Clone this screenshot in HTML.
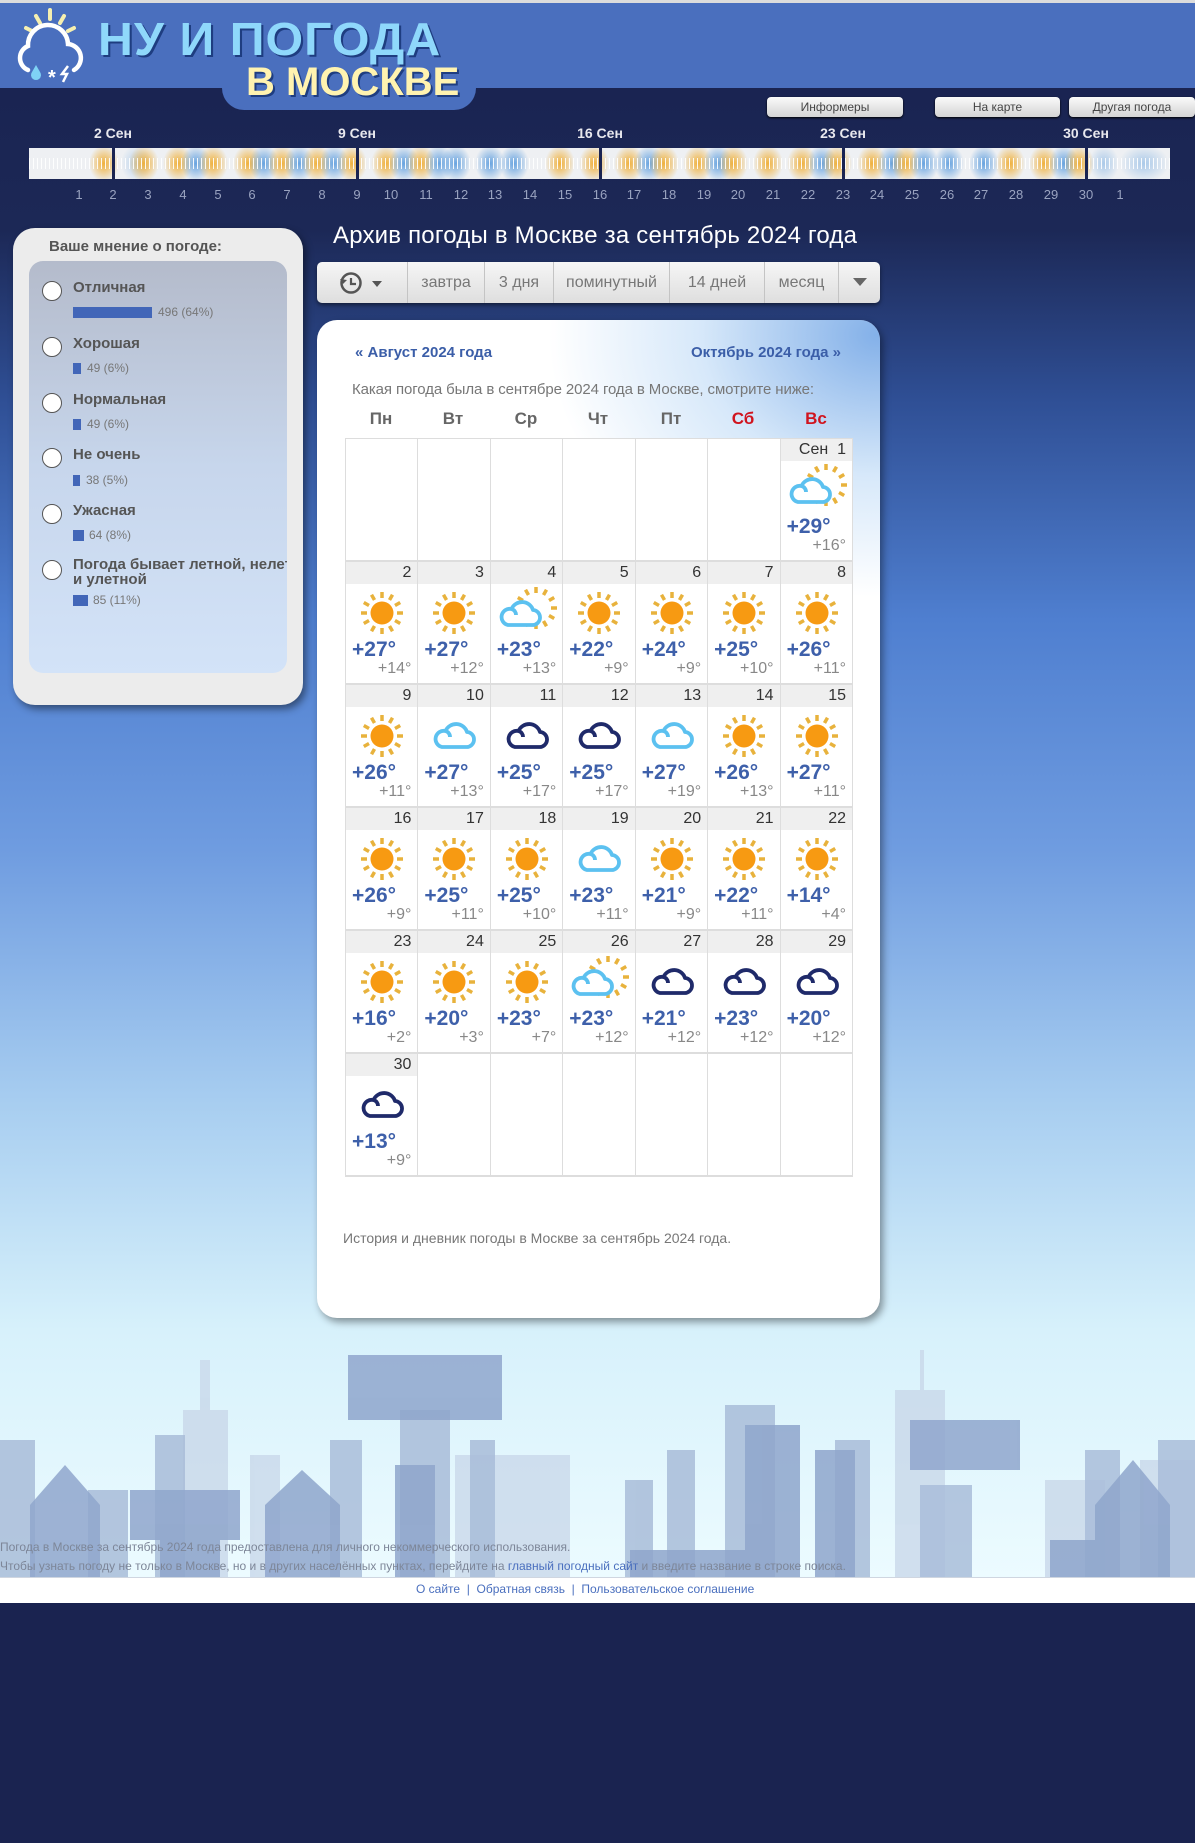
<!DOCTYPE html>
<html><head><meta charset="utf-8">
<style>
*{margin:0;padding:0;box-sizing:border-box}
body{width:1195px;height:1843px;position:relative;overflow:hidden;font-family:"Liberation Sans","DejaVu Sans",sans-serif;
background:linear-gradient(180deg,#dcdcdc 0,#dcdcdc 3px,#4a6fbe 3px,#4a6fbe 88px,#1a2452 88px,#1c2856 230px,#2f4f95 400px,#4f7fd0 620px,#6f9ce0 850px,#a7cdf0 1100px,#d7f1fb 1330px,#ecfbff 1578px,#fff 1578px,#fff 1603px,#1a2350 1603px);}
.abs{position:absolute}
.hbump{left:222px;top:80px;width:254px;height:30px;background:#4a6fbe;border-radius:0 0 22px 22px}
.logo1{left:98px;top:12px;font-size:46px;font-weight:900;color:#8fd8fb;letter-spacing:1px;text-shadow:2px 2px 0 #1e3d80;transform:scaleX(1.05);transform-origin:left}
.logo2{left:246px;top:60px;font-size:40px;font-weight:900;color:#fff3b0;text-shadow:2px 2px 0 #1e3d80}
.btn{top:97px;height:20px;border-radius:4px;background:linear-gradient(#fafafa,#d4d4d4);font-size:12px;color:#444;text-align:center;line-height:20px;box-shadow:0 1px 2px #000}
.wl{top:125px;font-size:14px;font-weight:bold;color:#e8e8ee;transform:translateX(-50%)}
.num{top:187px;font-size:13px;color:#9aa3c0;transform:translateX(-50%)}
.bar{left:29px;top:148px;width:1141px;height:31px;background:#eef0f3;overflow:hidden}
.bar .t{position:absolute;inset:10px 0;background:repeating-linear-gradient(90deg,rgba(255,255,255,.9) 0 1px,transparent 1px 4px)}
.bl{position:absolute;top:0;height:31px;width:30px}
.o{background:radial-gradient(ellipse 50% 60% at center,rgba(240,170,40,.9),rgba(240,170,40,0))}
.b{background:radial-gradient(ellipse 50% 60% at center,rgba(80,150,220,.85),rgba(80,150,220,0))}
.sep{position:absolute;top:0;width:3px;height:31px;background:#1a2452}
.panel{left:13px;top:228px;width:290px;height:477px;background:#ececec;border-radius:22px;box-shadow:3px 4px 8px rgba(0,0,0,.45)}
.inner{left:29px;top:261px;width:258px;height:412px;border-radius:14px;background:linear-gradient(#b4bbcb,#c7d6ec 50%,#d3e3f8)}
.ptitle{left:49px;top:238px;font-size:15px;color:#555;font-weight:bold}
.rad{left:42px;width:20px;height:20px;border-radius:50%;background:#fff;border:1.5px solid #555}
.lab{left:73px;font-size:15px;font-weight:bold;color:#555}
.pb{left:73px;height:11px;background:#4266b8}
.pv{font-size:12px;color:#777}
.title{left:333px;top:222px;font-size:24px;color:#fff;font-weight:normal;letter-spacing:.2px}
.tabs{left:317px;top:262px;width:563px;height:41px;border-radius:5px;background:linear-gradient(#f6f6f6,#dedede);box-shadow:0 2px 4px rgba(0,0,0,.5)}
.tab{top:262px;height:41px;line-height:41px;font-size:16px;color:#777;text-align:center;border-left:1px solid #c4c4c4}
.card{left:317px;top:320px;width:563px;height:998px;background:#fff;border-radius:20px;box-shadow:3px 4px 8px rgba(0,0,0,.4);overflow:hidden}
.glow{position:absolute;right:-60px;top:-80px;width:420px;height:380px;background:radial-gradient(ellipse at 85% 25%,rgba(90,150,225,.75),rgba(140,190,240,.35) 35%,rgba(255,255,255,0) 65%)}
.nav{top:344px;font-size:15px;font-weight:bold;color:#3b5ea8}
.intro{left:352px;top:381px;font-size:15px;color:#777;letter-spacing:-.1px}
.wd{top:409px;font-size:17px;font-weight:bold;color:#666;width:72px;text-align:center}
.grid{left:345px;top:438px;width:508px;display:grid;grid-template-columns:repeat(7,1fr);grid-auto-rows:123px;border-left:1px solid #ddd;border-top:1px solid #ddd}
.grid>div{border-right:1px solid #ddd;border-bottom:2px solid #ddd;position:relative;background:#fff}
.d{height:22px;background:#efefef;text-align:right;padding-right:6px;font-size:16px;color:#333;line-height:22px}
.grid svg{position:absolute;left:13px;top:28px;width:46px;height:46px;overflow:visible}
.h{position:absolute;left:6px;top:76px;font-size:21px;font-weight:bold;color:#3e60aa}
.l{position:absolute;right:6px;top:98px;font-size:16px;color:#888}
.foot{left:0;font-size:12px;color:#7d8698}
</style></head><body>
<svg width="0" height="0" style="position:absolute">
<defs>
<g id="rays" stroke="#e8b23c" stroke-width="3.5" stroke-linecap="butt">
<line x1="23" y1="2" x2="23" y2="8"/><line x1="23" y1="38" x2="23" y2="44"/><line x1="2" y1="23" x2="8" y2="23"/><line x1="38" y1="23" x2="44" y2="23"/>
<line x1="12.5" y1="4.8" x2="15.5" y2="10"/><line x1="30.5" y1="36" x2="33.5" y2="41.2"/><line x1="4.8" y1="12.5" x2="10" y2="15.5"/><line x1="36" y1="30.5" x2="41.2" y2="33.5"/>
<line x1="33.5" y1="4.8" x2="30.5" y2="10"/><line x1="15.5" y1="36" x2="12.5" y2="41.2"/><line x1="41.2" y1="12.5" x2="36" y2="15.5"/><line x1="10" y1="30.5" x2="4.8" y2="33.5"/>
</g>
<symbol id="sun" viewBox="0 0 46 46" overflow="visible"><use href="#rays"/><circle cx="23" cy="23" r="11.5" fill="#f79a12"/></symbol>
<path id="cl" d="M11 34 H35 A7.5 7.5 0 0 0 36 19 A11.5 11.5 0 0 0 14.5 18 A8 8 0 0 0 11 34 Z M14.5 18 A6 6 0 0 1 19 24" stroke-width="3.8" stroke-linejoin="round"/>
<symbol id="lc" viewBox="0 0 46 46" overflow="visible"><use href="#cl" stroke="#5cc1f0" fill="none"/></symbol>
<symbol id="dc" viewBox="0 0 46 46" overflow="visible"><use href="#cl" stroke="#1f2a6a" fill="none"/></symbol>
<symbol id="pc" viewBox="0 0 46 46" overflow="visible"><g transform="translate(9,-5)"><use href="#rays"/></g><use href="#cl" stroke="#5cc1f0" fill="#fff" transform="translate(-7,1)"/></symbol>
</defs></svg>

<!-- header -->
<div class="abs hbump"></div>
<svg class="abs" style="left:12px;top:6px" width="76" height="80" viewBox="0 0 76 80">
<g stroke="#f6efb0" stroke-width="4" stroke-linecap="round"><line x1="38" y1="4" x2="38" y2="13"/><line x1="24" y1="10" x2="28" y2="17"/><line x1="52" y1="10" x2="48" y2="17"/><line x1="14" y1="22" x2="20" y2="25"/><line x1="62" y1="22" x2="56" y2="25"/></g>
<path d="M16 64 A13 13 0 0 1 16 40 A20 20 0 0 1 56 38 A14 14 0 0 1 62 64" fill="none" stroke="#fff" stroke-width="4.5" stroke-linecap="round"/>
<path d="M28 66 a5 5 0 1 1 -8 0 l4 -7z" fill="#7fd3f5"/>
<text x="36" y="78" fill="#fff" font-size="20" font-weight="bold" font-family="Liberation Sans">*</text>
<path d="M56 60 l-6 8 h5 l-4 8" stroke="#fff" stroke-width="2.5" fill="none"/>
</svg>
<div class="abs logo1">НУ И ПОГОДА</div>
<div class="abs logo2">В МОСКВЕ</div>
<div class="abs btn" style="left:767px;width:136px">Информеры</div>
<div class="abs btn" style="left:935px;width:125px">На карте</div>
<div class="abs btn" style="left:1069px;width:126px">Другая погода</div>

<!-- timeline -->
<div class="abs wl" style="left:113px">2 Сен</div>
<div class="abs wl" style="left:357px">9 Сен</div>
<div class="abs wl" style="left:600px">16 Сен</div>
<div class="abs wl" style="left:843px">23 Сен</div>
<div class="abs wl" style="left:1086px">30 Сен</div>
<div class="abs bar">
<div class="bl o" style="left:60px"></div>
<div class="bl b" style="left:92px;opacity:.4"></div><div class="bl o" style="left:100px"></div><div class="bl o" style="left:134px"></div><div class="bl b" style="left:152px"></div><div class="bl o" style="left:169px"></div><div class="bl o" style="left:204px"></div><div class="bl b" style="left:220px"></div><div class="bl o" style="left:238px"></div><div class="bl b" style="left:255px"></div><div class="bl o" style="left:273px"></div><div class="bl b" style="left:290px"></div><div class="bl o" style="left:308px"></div>
<div class="bl o" style="left:342px"></div><div class="bl b" style="left:360px"></div><div class="bl o" style="left:377px"></div><div class="bl b" style="left:395px"></div><div class="bl b" style="left:412px"></div><div class="bl b" style="left:446px"></div><div class="bl b" style="left:470px"></div><div class="bl o" style="left:516px"></div><div class="bl o" style="left:550px"></div>
<div class="bl o" style="left:585px"></div><div class="bl b" style="left:605px"></div><div class="bl o" style="left:620px"></div><div class="bl o" style="left:654px"></div><div class="bl b" style="left:674px"></div><div class="bl o" style="left:689px"></div><div class="bl o" style="left:724px"></div><div class="bl o" style="left:758px"></div><div class="bl b" style="left:778px"></div><div class="bl o" style="left:793px"></div>
<div class="bl o" style="left:828px"></div><div class="bl b" style="left:848px"></div><div class="bl o" style="left:862px"></div><div class="bl b" style="left:880px"></div><div class="bl b" style="left:905px"></div><div class="bl b" style="left:940px"></div><div class="bl o" style="left:966px"></div><div class="bl o" style="left:1000px"></div><div class="bl b" style="left:1020px"></div><div class="bl o" style="left:1035px"></div>
<div class="bl b" style="left:1060px;opacity:.5"></div><div class="bl b" style="left:1090px;opacity:.5;width:50px"></div>
<div class="t"></div>
<div class="sep" style="left:83px"></div><div class="sep" style="left:327px"></div><div class="sep" style="left:570px"></div><div class="sep" style="left:813px"></div><div class="sep" style="left:1056px"></div>
</div>
<div class="abs num" style="left:79px">1</div><div class="abs num" style="left:113px">2</div><div class="abs num" style="left:148px">3</div><div class="abs num" style="left:183px">4</div><div class="abs num" style="left:218px">5</div><div class="abs num" style="left:252px">6</div><div class="abs num" style="left:287px">7</div><div class="abs num" style="left:322px">8</div><div class="abs num" style="left:357px">9</div><div class="abs num" style="left:391px">10</div><div class="abs num" style="left:426px">11</div><div class="abs num" style="left:461px">12</div><div class="abs num" style="left:495px">13</div><div class="abs num" style="left:530px">14</div><div class="abs num" style="left:565px">15</div><div class="abs num" style="left:600px">16</div><div class="abs num" style="left:634px">17</div><div class="abs num" style="left:669px">18</div><div class="abs num" style="left:704px">19</div><div class="abs num" style="left:738px">20</div><div class="abs num" style="left:773px">21</div><div class="abs num" style="left:808px">22</div><div class="abs num" style="left:843px">23</div><div class="abs num" style="left:877px">24</div><div class="abs num" style="left:912px">25</div><div class="abs num" style="left:947px">26</div><div class="abs num" style="left:981px">27</div><div class="abs num" style="left:1016px">28</div><div class="abs num" style="left:1051px">29</div><div class="abs num" style="left:1086px">30</div><div class="abs num" style="left:1120px">1</div>

<!-- left panel -->
<div class="abs panel"></div>
<div class="abs inner"></div>
<div class="abs ptitle">Ваше мнение о погоде:</div>
<div class="abs rad" style="top:281px"></div><div class="abs lab" style="top:279px">Отличная</div><div class="abs pb" style="top:307px;width:79px"></div><div class="abs pv" style="left:158px;top:305px">496 (64%)</div>
<div class="abs rad" style="top:337px"></div><div class="abs lab" style="top:335px">Хорошая</div><div class="abs pb" style="top:363px;width:8px"></div><div class="abs pv" style="left:87px;top:361px">49 (6%)</div>
<div class="abs rad" style="top:393px"></div><div class="abs lab" style="top:391px">Нормальная</div><div class="abs pb" style="top:419px;width:8px"></div><div class="abs pv" style="left:87px;top:417px">49 (6%)</div>
<div class="abs rad" style="top:448px"></div><div class="abs lab" style="top:446px">Не очень</div><div class="abs pb" style="top:475px;width:7px"></div><div class="abs pv" style="left:86px;top:473px">38 (5%)</div>
<div class="abs rad" style="top:504px"></div><div class="abs lab" style="top:502px">Ужасная</div><div class="abs pb" style="top:530px;width:11px"></div><div class="abs pv" style="left:89px;top:528px">64 (8%)</div>
<div class="abs rad" style="top:560px"></div><div class="abs lab" style="top:557px;width:214px;white-space:nowrap;overflow:hidden;line-height:15px">Погода бывает летной, нелетной<br>и улетной</div><div class="abs pb" style="top:595px;width:15px"></div><div class="abs pv" style="left:93px;top:593px">85 (11%)</div>

<!-- main -->
<div class="abs title">Архив погоды в Москве за сентябрь 2024 года</div>
<div class="abs tabs"></div>
<svg class="abs" style="left:338px;top:270px" width="48" height="26" viewBox="0 0 48 26"><circle cx="13" cy="13" r="9.5" fill="none" stroke="#555" stroke-width="2.5"/><path d="M13 8v6h5" stroke="#555" stroke-width="2.2" fill="none"/><path d="M2 9l3 5 4-4z" fill="#555"/><path d="M34 11h10l-5 6z" fill="#555"/></svg>
<div class="abs tab" style="left:407px;width:77px">завтра</div>
<div class="abs tab" style="left:484px;width:69px">3 дня</div>
<div class="abs tab" style="left:553px;width:116px">поминутный</div>
<div class="abs tab" style="left:669px;width:95px">14 дней</div>
<div class="abs tab" style="left:764px;width:74px">месяц</div>
<div class="abs tab" style="left:838px;width:42px"><svg width="14" height="10" viewBox="0 0 14 10"><path d="M0 1h14l-7 8z" fill="#666"/></svg></div>

<div class="abs card"><div class="glow"></div></div>
<div class="abs nav" style="left:355px">« Август 2024 года</div>
<div class="abs nav" style="left:691px">Октябрь 2024 года »</div>
<div class="abs intro">Какая погода была в сентябре 2024 года в Москве, смотрите ниже:</div>
<div class="abs wd" style="left:345px">Пн</div><div class="abs wd" style="left:417px">Вт</div><div class="abs wd" style="left:490px">Ср</div><div class="abs wd" style="left:562px">Чт</div><div class="abs wd" style="left:635px">Пт</div><div class="abs wd" style="left:707px;color:#d0141e">Сб</div><div class="abs wd" style="left:780px;color:#d0141e">Вс</div>

<div class="abs grid">
<div></div><div></div><div></div><div></div><div></div><div></div>
<div><div class="d">Сен&nbsp; 1</div><svg><use href="#pc"/></svg><div class="h">+29°</div><div class="l">+16°</div></div>
<div><div class="d">2</div><svg><use href="#sun"/></svg><div class="h">+27°</div><div class="l">+14°</div></div>
<div><div class="d">3</div><svg><use href="#sun"/></svg><div class="h">+27°</div><div class="l">+12°</div></div>
<div><div class="d">4</div><svg><use href="#pc"/></svg><div class="h">+23°</div><div class="l">+13°</div></div>
<div><div class="d">5</div><svg><use href="#sun"/></svg><div class="h">+22°</div><div class="l">+9°</div></div>
<div><div class="d">6</div><svg><use href="#sun"/></svg><div class="h">+24°</div><div class="l">+9°</div></div>
<div><div class="d">7</div><svg><use href="#sun"/></svg><div class="h">+25°</div><div class="l">+10°</div></div>
<div><div class="d">8</div><svg><use href="#sun"/></svg><div class="h">+26°</div><div class="l">+11°</div></div>
<div><div class="d">9</div><svg><use href="#sun"/></svg><div class="h">+26°</div><div class="l">+11°</div></div>
<div><div class="d">10</div><svg><use href="#lc"/></svg><div class="h">+27°</div><div class="l">+13°</div></div>
<div><div class="d">11</div><svg><use href="#dc"/></svg><div class="h">+25°</div><div class="l">+17°</div></div>
<div><div class="d">12</div><svg><use href="#dc"/></svg><div class="h">+25°</div><div class="l">+17°</div></div>
<div><div class="d">13</div><svg><use href="#lc"/></svg><div class="h">+27°</div><div class="l">+19°</div></div>
<div><div class="d">14</div><svg><use href="#sun"/></svg><div class="h">+26°</div><div class="l">+13°</div></div>
<div><div class="d">15</div><svg><use href="#sun"/></svg><div class="h">+27°</div><div class="l">+11°</div></div>
<div><div class="d">16</div><svg><use href="#sun"/></svg><div class="h">+26°</div><div class="l">+9°</div></div>
<div><div class="d">17</div><svg><use href="#sun"/></svg><div class="h">+25°</div><div class="l">+11°</div></div>
<div><div class="d">18</div><svg><use href="#sun"/></svg><div class="h">+25°</div><div class="l">+10°</div></div>
<div><div class="d">19</div><svg><use href="#lc"/></svg><div class="h">+23°</div><div class="l">+11°</div></div>
<div><div class="d">20</div><svg><use href="#sun"/></svg><div class="h">+21°</div><div class="l">+9°</div></div>
<div><div class="d">21</div><svg><use href="#sun"/></svg><div class="h">+22°</div><div class="l">+11°</div></div>
<div><div class="d">22</div><svg><use href="#sun"/></svg><div class="h">+14°</div><div class="l">+4°</div></div>
<div><div class="d">23</div><svg><use href="#sun"/></svg><div class="h">+16°</div><div class="l">+2°</div></div>
<div><div class="d">24</div><svg><use href="#sun"/></svg><div class="h">+20°</div><div class="l">+3°</div></div>
<div><div class="d">25</div><svg><use href="#sun"/></svg><div class="h">+23°</div><div class="l">+7°</div></div>
<div><div class="d">26</div><svg><use href="#pc"/></svg><div class="h">+23°</div><div class="l">+12°</div></div>
<div><div class="d">27</div><svg><use href="#dc"/></svg><div class="h">+21°</div><div class="l">+12°</div></div>
<div><div class="d">28</div><svg><use href="#dc"/></svg><div class="h">+23°</div><div class="l">+12°</div></div>
<div><div class="d">29</div><svg><use href="#dc"/></svg><div class="h">+20°</div><div class="l">+12°</div></div>
<div><div class="d">30</div><svg><use href="#dc"/></svg><div class="h">+13°</div><div class="l">+9°</div></div>
<div></div><div></div><div></div><div></div><div></div><div></div>
</div>
<div class="abs" style="left:343px;top:1230px;font-size:14px;color:#777">История и дневник погоды в Москве за сентябрь 2024 года.</div>

<!-- skyline -->
<svg class="abs" style="left:0;top:1340px" width="1195" height="238" viewBox="0 0 1195 238">
<g fill="#c9d8ea" opacity=".8">
<rect x="183" y="70" width="45" height="168"/><rect x="200" y="20" width="10" height="60"/><rect x="250" y="115" width="30" height="123"/>
<rect x="895" y="50" width="50" height="188"/><rect x="920" y="10" width="4" height="50"/><rect x="1140" y="120" width="55" height="118"/>
<rect x="455" y="115" width="115" height="123"/><rect x="1045" y="140" width="60" height="98"/>
</g>
<g fill="#a9bdd9" opacity=".85">
<rect x="0" y="100" width="35" height="138"/><rect x="88" y="150" width="40" height="88"/><rect x="155" y="95" width="30" height="143"/>
<rect x="330" y="100" width="32" height="138"/><rect x="400" y="70" width="50" height="168"/><rect x="470" y="100" width="25" height="138"/>
<rect x="625" y="140" width="28" height="98"/><rect x="667" y="110" width="28" height="128"/><rect x="725" y="65" width="50" height="173"/>
<rect x="835" y="100" width="35" height="138"/><rect x="1085" y="110" width="35" height="128"/><rect x="1158" y="100" width="37" height="138"/>
<rect x="920" y="145" width="52" height="93"/>
</g>
<g fill="#8fa6cc" opacity=".85">
<rect x="348" y="15" width="154" height="65"/><rect x="130" y="150" width="110" height="50"/><rect x="910" y="80" width="110" height="50"/>
<polygon points="30,238 30,165 65,125 100,165 100,238"/><polygon points="265,238 265,165 302,130 340,165 340,238"/>
<polygon points="1095,238 1095,165 1133,120 1170,165 1170,238"/>
<rect x="395" y="125" width="40" height="113"/><rect x="745" y="85" width="55" height="153"/><rect x="815" y="110" width="40" height="128"/>
<rect x="630" y="210" width="145" height="28"/><rect x="1050" y="200" width="105" height="38"/><rect x="160" y="200" width="60" height="38"/>
</g>
</svg>
<div class="abs foot" style="top:1540px">Погода в Москве за сентябрь 2024 года предоставлена для личного некоммерческого использования.</div>
<div class="abs foot" style="top:1559px">Чтобы узнать погоду не только в Москве, но и в других населённых пунктах, перейдите на <span style="color:#4a6fbe">главный погодный сайт</span> и введите название в строке поиска.</div>
<div class="abs" style="left:0;top:1577px;width:1195px;height:1px;background:#cfd6e0"></div>
<div class="abs" style="left:416px;top:1582px;font-size:12px;color:#4a6fbe">О сайте &nbsp;|&nbsp; Обратная связь &nbsp;|&nbsp; Пользовательское соглашение</div>
</body></html>
